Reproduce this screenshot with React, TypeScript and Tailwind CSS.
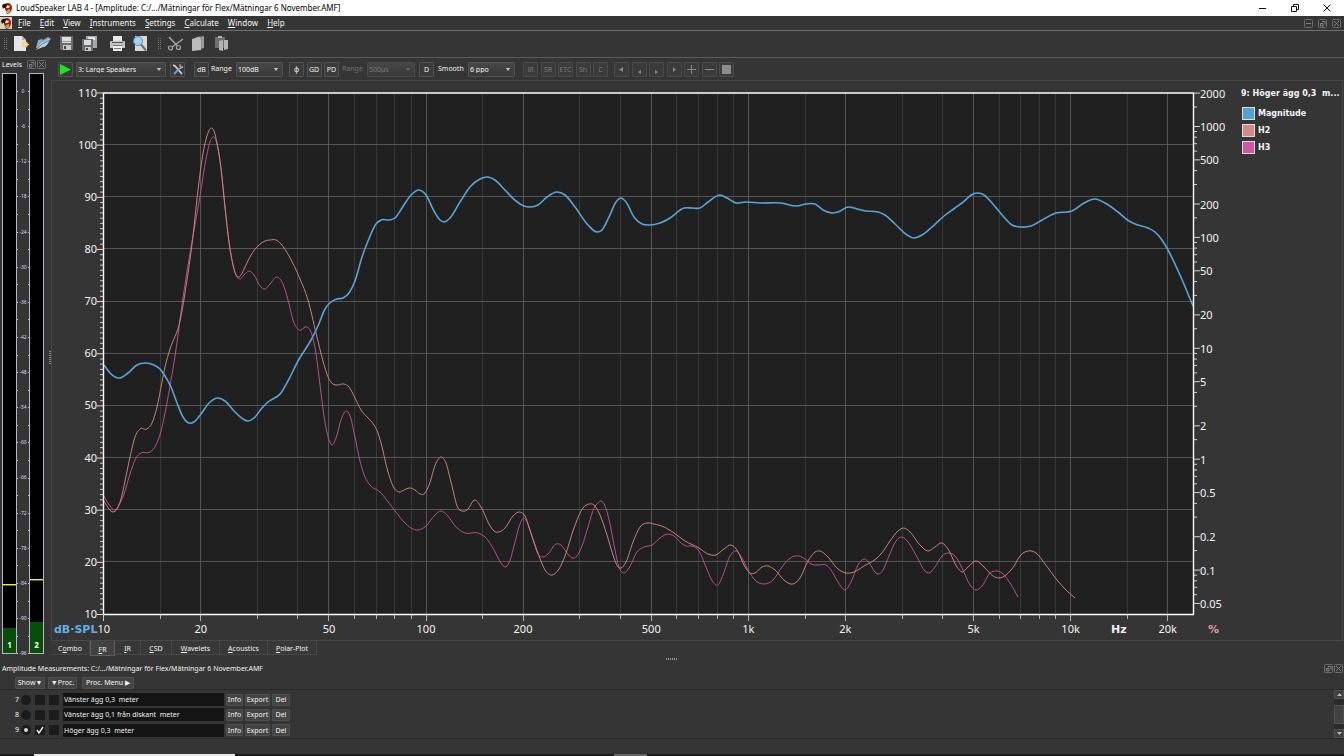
import { useState } from 'react'
import type { ReactNode } from 'react'
import clsx from 'clsx'

type Point = [number, number]

const MENUS = ['File', 'Edit', 'View', 'Instruments', 'Settings', 'Calculate', 'Window', 'Help']

const TABS = [
  { name: 'Combo', key: 1, width: 'w-[39px]' },
  { name: 'FR', key: 0, width: 'w-[25px]' },
  { name: 'IR', key: 0, width: 'w-[26px]' },
  { name: 'CSD', key: 0, width: 'w-[31px]' },
  { name: 'Wavelets', key: 0, width: 'w-[48px]' },
  { name: 'Acoustics', key: 0, width: 'w-[48px]' },
  { name: 'Polar-Plot', key: 0, width: 'w-[49px]' },
]

const MEASUREMENTS = [
  { id: 7, name: 'Vänster ägg 0,3  meter' },
  { id: 8, name: 'Vänster ägg 0,1 från diskant  meter' },
  { id: 9, name: 'Höger ägg 0,3  meter' },
]

const LEGEND = [
  { name: 'Magnitude', swatch: 'bg-[#559fd3]' },
  { name: 'H2', swatch: 'bg-[#d18a86]' },
  { name: 'H3', swatch: 'bg-[#d4559f]' },
]

const MAGNITUDE: Point[] = [
  [104, 365], [110, 373], [119, 378], [128, 373], [137, 365], [145, 363], [154, 365], [160, 369], [165, 376],
  [171, 387], [177, 403], [183, 417], [189, 423], [194, 422], [201, 414], [209, 403], [218, 398], [225, 401],
  [235, 412], [243, 419], [248, 421], [254, 418], [262, 408], [268, 402], [281, 393], [289, 379],
  [298, 361], [311, 340], [318, 326], [325, 309], [331, 302], [337, 299], [343, 298], [349, 293], [355, 281],
  [362, 257], [368, 241], [376, 224], [381, 220], [389, 220], [395, 218], [402, 208], [411, 195], [419, 190],
  [426, 195], [434, 211], [440, 220], [444, 222], [450, 218], [460, 202], [470, 187], [480, 179], [488, 177],
  [495, 180], [505, 190], [516, 201], [524, 206], [530, 207], [538, 205], [547, 197], [557, 192], [565, 195],
  [575, 207], [588, 225], [597, 232], [602, 230], [609, 217], [616, 202], [621, 198], [626, 202], [634, 217],
  [642, 224], [649, 225], [660, 223], [670, 218], [684, 208], [692, 208], [700, 208], [708, 202], [720, 195],
  [727, 198], [736, 203], [745, 202], [760, 203], [781, 203], [797, 206], [806, 204],
  [815, 204], [823, 210], [832, 213], [838, 212], [848, 207], [857, 209], [866, 211], [878, 212], [885, 215],
  [895, 224], [907, 235], [914, 238], [922, 235], [932, 227], [944, 216], [955, 208], [962, 203], [973, 194],
  [978, 193], [984, 195], [992, 203], [1003, 216], [1012, 225], [1021, 227], [1031, 226], [1042, 220],
  [1056, 213], [1072, 211], [1084, 203], [1095, 199], [1105, 203], [1118, 212], [1129, 221], [1138, 225],
  [1148, 228], [1155, 232], [1162, 240], [1168, 250], [1180, 275], [1193, 306],
]

const H2: Point[] = [
  [104, 501], [109, 509], [113, 512], [117, 509], [121, 499], [125, 481], [130, 457], [135, 437], [140, 429],
  [147, 429], [152, 423], [157, 407], [162, 382], [165, 367], [170, 349], [180, 321], [187, 280], [193, 236],
  [198, 190], [204, 148], [208, 133], [211, 128], [214, 131], [217, 143], [221, 168], [225, 207], [229, 242],
  [233, 265], [236, 275], [238, 277], [241, 275], [245, 267], [251, 255], [258, 246], [265, 241], [270, 240],
  [276, 240], [281, 244], [289, 256], [300, 279], [308, 300], [316, 333], [323, 361], [328, 377], [333, 384],
  [337, 385], [344, 384], [349, 387], [355, 398], [361, 410], [368, 418], [374, 425], [378, 433], [381, 443],
  [388, 472], [394, 488], [399, 492], [404, 490], [410, 488], [415, 490], [420, 494], [425, 493], [429, 485],
  [436, 463], [441, 457], [446, 463], [451, 482], [458, 508], [462, 511], [467, 510], [475, 500], [481, 507],
  [489, 524], [494, 531], [499, 532], [505, 528], [513, 516], [520, 512], [525, 516], [530, 530], [539, 556],
  [545, 570], [552, 575], [559, 569], [565, 556], [574, 528], [583, 508], [589, 504], [594, 505], [600, 515],
  [607, 535], [614, 558], [618, 567], [621, 568], [626, 562], [633, 542], [640, 527], [647, 523], [654, 524],
  [664, 527], [674, 533], [685, 541], [699, 548], [708, 554], [716, 555], [724, 549], [731, 545], [737, 550],
  [745, 567], [750, 573], [755, 573], [762, 567], [768, 566], [775, 570], [785, 581], [793, 584], [800, 578],
  [808, 561], [815, 552], [820, 551], [827, 556], [838, 569], [846, 573], [854, 572], [864, 566], [873, 561],
  [881, 554], [890, 541], [898, 531], [904, 528], [910, 532], [920, 545], [928, 551], [935, 547], [942, 543],
  [948, 549], [957, 567], [962, 572], [968, 567], [976, 561], [984, 567], [993, 576], [999, 578], [1006, 575],
  [1014, 566], [1020, 556], [1028, 551], [1036, 553], [1045, 564], [1057, 580], [1067, 591], [1075, 598],
]

const H3: Point[] = [
  [104, 496], [110, 506], [115, 510], [119, 505], [124, 494], [130, 474], [136, 458], [141, 453], [150, 452],
  [156, 445], [161, 431], [166, 408], [171, 380], [175, 356], [178, 335], [181, 312], [186, 278], [192, 242],
  [200, 196], [206, 159], [210, 142], [214, 137], [217, 144], [221, 169], [225, 207], [229, 242], [233, 265],
  [237, 277], [240, 279], [244, 275], [249, 271], [254, 275], [260, 286], [265, 289], [270, 284], [277, 277],
  [283, 284], [288, 300], [293, 320], [299, 330], [307, 327], [311, 332], [316, 354], [320, 385], [324, 416],
  [329, 440], [332, 445], [336, 438], [341, 420], [346, 411], [350, 416], [355, 437], [360, 461], [365, 477],
  [370, 485], [380, 492], [392, 507], [404, 522], [411, 528], [418, 530], [426, 526], [435, 515], [441, 511],
  [447, 515], [456, 527], [465, 533], [478, 533], [486, 538], [494, 550], [501, 563], [505, 567], [509, 563],
  [514, 546], [520, 524], [524, 518], [528, 525], [533, 540], [538, 554], [543, 557], [548, 554], [556, 544],
  [561, 545], [567, 553], [572, 558], [577, 556], [582, 546], [588, 527], [594, 508], [598, 503], [601, 501],
  [605, 506], [610, 524], [615, 550], [619, 567], [624, 573], [629, 568], [637, 552], [644, 547], [652, 545],
  [660, 538], [668, 534], [674, 536], [681, 543], [686, 546], [692, 546], [699, 551], [706, 567], [713, 582],
  [718, 585], [723, 575], [730, 556], [736, 551], [742, 558], [748, 570], [755, 580], [764, 584], [773, 580],
  [782, 567], [789, 559], [799, 556], [805, 559], [811, 564], [819, 565], [826, 565], [831, 570], [838, 582],
  [845, 590], [851, 582], [858, 565], [864, 559], [870, 564], [875, 572], [879, 574], [883, 570], [889, 556],
  [896, 541], [902, 537], [908, 542], [917, 557], [925, 571], [929, 573], [935, 567], [942, 556], [948, 553],
  [955, 556], [962, 568], [970, 585], [976, 590], [982, 586], [990, 573], [996, 571], [1002, 573], [1010, 583],
  [1018, 597],
]

// plot area in chart units
const LEFT = 104
const RIGHT = 1193
const TOP = 93
const BOTTOM = 614

const freqX = (f: number) => 103.7 + 322.3 * Math.log10(f / 10)
const dbY = (db: number) => 92.5 + (110 - db) * 5.215
const percentY = (p: number) => 126 - 110.9 * Math.log10(p / 1000)

// cubic hermite through all points, slopes weighted by the spacing on both sides
function smooth(pts: Point[]) {
  const slope = (i: number) => (pts[i + 1][1] - pts[i][1]) / (pts[i + 1][0] - pts[i][0])
  const last = pts.length - 1
  const tangents = pts.map((p, i) => {
    if (i === 0) return slope(0)
    if (i === last) return slope(last - 1)
    const before = p[0] - pts[i - 1][0]
    const after = pts[i + 1][0] - p[0]
    return (slope(i - 1) * after + slope(i) * before) / (before + after)
  })
  let d = `M${pts[0][0]} ${pts[0][1]}`
  for (let i = 0; i < last; i++) {
    const [x0, y0] = pts[i]
    const [x1, y1] = pts[i + 1]
    const h = (x1 - x0) / 3
    d += `C${x0 + h} ${y0 + tangents[i] * h} ${x1 - h} ${y1 - tangents[i + 1] * h} ${x1} ${y1}`
  }
  return d
}

const STEPS = [1, 1.5, 2, 3, 4, 5, 6, 7, 8, 9]
const isMajor = (m: number) => m === 1 || m === 2 || m === 5

const FREQS = [10, 100, 1000, 10000]
  .flatMap(dec => STEPS.map(m => ({ f: dec * m, major: isMajor(m) })))
  .filter(({ f }) => f <= 20000)

const PERCENTS = [0.01, 0.1, 1, 10, 100, 1000]
  .flatMap(dec => STEPS.map(m => ({ p: dec * m, major: isMajor(m) })))
  .filter(({ p }) => p >= 0.0499 && p <= 2000)

const freqLabel = (f: number) => (f >= 1000 ? `${f / 1000}k` : `${f}`)

function Chart() {
  return (
    <svg viewBox="52 81 1180 559" className="min-w-0 flex-1 font-['Noto_Sans',sans-serif] text-[11px]" role="img" aria-label="Frequency response">
      <rect x={LEFT} y={TOP} width={RIGHT - LEFT} height={BOTTOM - TOP} fill="#202020" />
      {FREQS.filter(({ f }) => f > 10).map(({ f, major }) => (
        <g key={f}>
          <path d={`M${Math.floor(freqX(f)) + 0.5} ${TOP}V${BOTTOM}`} stroke={major ? '#555' : '#383838'} />
          <path d={`M${Math.floor(freqX(f)) + 0.5} ${BOTTOM}v${major ? 7 : 5}`} stroke="#b4b4b4" />
        </g>
      ))}
      {[100, 90, 80, 70, 60, 50, 40, 30, 20].map(db => (
        <path key={db} d={`M${LEFT} ${Math.floor(dbY(db)) + 0.5}H${RIGHT}`} stroke="#555" />
      ))}
      {Array.from({ length: 101 }, (_, i) => (
        <path key={i} d={`M${i % 10 ? 100 : 97} ${dbY(110 - i) + 0.5}H103`} stroke={i % 10 ? '#c8c8d0' : '#e0e0e0'} />
      ))}
      {PERCENTS.map(({ p, major }) => (
        <path key={p} d={`M1194 ${percentY(p) + 0.5}h${major ? 6 : 3}`} stroke="#d0d0d8" />
      ))}
      <path d={smooth(H3)} fill="none" stroke="#b8508e" />
      <path d={smooth(H2)} fill="none" stroke="#c58480" />
      <path d={smooth(MAGNITUDE)} fill="none" stroke="#5aa5d8" strokeWidth="1.6" />
      <path d="M103.5 614V93H1193.5V614" fill="none" stroke="#fff" strokeWidth="1.4" />
      <path d="M103 614.5H1194" stroke="#fff" strokeWidth="1.4" />
      <path d="M103.5 614v7" stroke="#d0d0d0" />
      <g fill="#f4f4f4">
        {[110, 100, 90, 80, 70, 60, 50, 40, 30, 20, 10].map(db => (
          <text key={db} x="97" y={dbY(db) + 4} textAnchor="end">{db}</text>
        ))}
        {FREQS.filter(({ major }) => major).map(({ f }) => (
          <text key={f} x={freqX(f)} y="633" textAnchor="middle">{freqLabel(f)}</text>
        ))}
        {PERCENTS.filter(({ major }) => major).map(({ p }) => (
          <text key={p} x="1200" y={percentY(p) + 5}>{Number(p.toFixed(2))}</text>
        ))}
      </g>
      <g className="font-['DejaVu_Sans',sans-serif] font-bold">
        <text x="54" y="633" fill="#62b0e8">dB·SPL</text>
        <text x="1111" y="633" fill="#f0f0f0">Hz</text>
        <text x="1208" y="633" fill="#e89898">%</text>
      </g>
    </svg>
  )
}

const CHANNELS = [
  { id: 1, x: 3, level: 628, peak: 584 },
  { id: 2, x: 30, level: 622, peak: 579 },
]

function Meters() {
  return (
    <svg viewBox="0 71 50 585" className="w-full font-['Noto_Sans',sans-serif] text-[5px]" role="img" aria-label="Input levels">
      {CHANNELS.map(c => (
        <g key={c.id}>
          <rect x={c.x} y="73" width="14" height="581" fill="#000" />
          <rect x={c.x} y={c.level} width="14" height={654 - c.level} fill="#054f0b" />
          <rect x={c.x - 0.5} y="73.5" width="14" height="580" fill="none" stroke="#b9b3cc" />
          <rect x={c.x} y={c.peak} width="13" height="1.4" fill="#f4f418" />
          <text x={c.x + 6.5} y="648" fill="#fff" textAnchor="middle" className="text-[8px] font-bold">{c.id}</text>
        </g>
      ))}
      {Array.from({ length: 33 }, (_, i) => (
        <path key={i} d={`M17 ${Math.round(91 + i * 17.57)}.5h1M28 ${Math.round(91 + i * 17.57)}.5h1`} stroke="#c8c4d4" />
      ))}
      {Array.from({ length: 17 }, (_, i) => (
        <text key={i} x="23" y={93 + i * 35.13} fill="#dcdce4" textAnchor="middle">{i * -6}</text>
      ))}
    </svg>
  )
}

function Parrot({ className }: { className?: string }) {
  return (
    <svg viewBox="0 0 12 12" className={className}>
      <path d="M4 2Q7 0 9.500 2Q12 5 10.500 8L9 11Q5 10 4 7Z" fill="#a81814" />
      <path d="M1 4Q2 1 5 2L8 3L6 6Q3 5 2 7Z" fill="#1b1510" />
      <path d="M6 3l3 1-1 2-3 0Z" fill="#e9e2c0" />
      <path d="M6 8l3-1 0 3-2 1.500Z" fill="#d6a51c" />
      <path d="M4 8l2 3 3 .5-3 .5Z" fill="#22301a" />
    </svg>
  )
}

// small square buttons found on every dock title
function DockIcon({ kind }: { kind: 'float' | 'close' | 'min' }) {
  return (
    <svg viewBox="0 0 9 9" className="size-[9px]" fill="none" stroke="#848484">
      <rect x="0.5" y="0.5" width="8" height="8" rx="1" stroke="#6c6c6c" />
      {kind === 'close' && <path d="M2 2l5 5M7 2l-5 5" />}
      {kind === 'float' && <path d="M4 2.500h3v3M2.500 4.500h2.500v2.500h-2.500z" />}
      {kind === 'min' && <path d="M2 4.500h5" />}
    </svg>
  )
}

function Grip() {
  return (
    <svg viewBox="0 0 4 12" className="h-[12px] w-[4px] shrink-0" fill="#7a7a7a">
      {[0, 2, 4, 6, 8, 10].map(y => (
        <g key={y}>
          <rect y={y} width="1" height="1" />
          <rect x="2" y={y} width="1" height="1" />
        </g>
      ))}
    </svg>
  )
}

function IconButton({ label, className, children }: { label: string; className?: string; children: ReactNode }) {
  return (
    <button aria-label={label} className={clsx('size-[17px] shrink-0', className)}>
      <svg viewBox="0 0 17 17" className="size-full">{children}</svg>
    </button>
  )
}

function FileToolbar() {
  return (
    <div className="flex h-[27px] items-center border-b border-[#5a5a5a] pb-[1px] pl-[4px]">
      <Grip />
      <IconButton label="New" className="ml-[5px]">
        <path d="M1 1h8l4 4v11H1z" fill="#e4e4ea" />
        <path d="M9 1v4h4z" fill="#b5b5bd" />
        <circle cx="12" cy="9.500" r="3" fill="#f4c878" />
        <path d="M12 5.500v8M8 9.500h8" stroke="#f6d9a0" />
      </IconButton>
      <IconButton label="Open" className="ml-[5px]">
        <path d="M1 13L3 5l4-1 1 1 5-3 2 1-5 9z" fill="#8ba9bd" />
        <path d="M1 15L6 8l10-5-4 7z" fill="#b7d2e4" />
        <path d="M2 14l5-5 8-4" fill="none" stroke="#5e8199" />
      </IconButton>
      <IconButton label="Save" className="ml-[6px]">
        <path d="M2 1h13v14H3l-1-1z" fill="#6c6c6c" />
        <rect x="4" y="2" width="9" height="6" fill="#dcdfe2" />
        <rect x="4" y="6" width="9" height="1" fill="#9a9a9a" />
        <rect x="5" y="10" width="8" height="5" fill="#c9c9c9" />
        <rect x="6" y="11" width="2" height="3" fill="#444" />
      </IconButton>
      <IconButton label="Save all" className="ml-[6px]">
        <path d="M5 1h11v12H5z" fill="#a5a9ab" />
        <path d="M7 2h7v3H7z" fill="#e6e6e6" />
        <path d="M1 4h11v12H2l-1-1z" fill="#6c6c6c" />
        <rect x="3" y="5" width="7" height="5" fill="#d8dbde" />
        <rect x="4" y="12" width="6" height="4" fill="#c9c9c9" />
        <rect x="5" y="13" width="2" height="2" fill="#444" />
      </IconButton>
      <IconButton label="Print" className="ml-[11px]">
        <path d="M4 1h9v6H4z" fill="#e8e8e8" />
        <path d="M1 7q0-1 1-1h13q1 0 1 1v6H1z" fill="#c2c2c2" />
        <path d="M3 7.500h11" stroke="#555" />
        <path d="M4 10h9v6H4z" fill="#eee" />
        <path d="M4 10.500h9M5 13.500h7" stroke="#777" />
      </IconButton>
      <IconButton label="Print preview" className="ml-[6px]">
        <path d="M3 1h12v15H3z" fill="#dadada" />
        <circle cx="6" cy="6" r="4.500" fill="#a7d0ea" stroke="#5d8ead" />
        <path d="M9 9.500l5 6" stroke="#6b6b6b" strokeWidth="2" />
      </IconButton>
      <div className="ml-[9px]">
        <Grip />
      </div>
      <IconButton label="Cut" className="ml-[5px]">
        <path d="M2 2l8 8.500M16 4L5 12" stroke="#a9a9a9" strokeWidth="1.4" />
        <circle cx="3.500" cy="13" r="2" fill="none" stroke="#a9a9a9" strokeWidth="1.2" />
        <circle cx="11.500" cy="12.500" r="2" fill="none" stroke="#a9a9a9" strokeWidth="1.2" />
      </IconButton>
      <IconButton label="Copy" className="ml-[6px]">
        <path d="M6 2l8-1v12l-4 1z" fill="#8d8d8d" />
        <path d="M2 4l7-2 2 2v11l-9 1z" fill="#bcbcbc" />
        <path d="M13 2v11" stroke="#b0b0b0" />
      </IconButton>
      <IconButton label="Paste" className="ml-[6px]">
        <path d="M2 2h10v11H2z" fill="#707070" />
        <path d="M5 1h4v2H5z" fill="#b4b4b4" />
        <path d="M6 6l4-1v11l-4-1zM11 5l4 0v9l-4 1z" fill="#b4b4b4" />
      </IconButton>
    </div>
  )
}

function SquareButton({ children, disabled, label }: { children: ReactNode; disabled?: boolean; label?: string }) {
  return (
    <button
      aria-label={label}
      disabled={disabled}
      className={clsx(
        'flex h-[15px] w-[15px] shrink-0 items-center justify-center rounded-[1px] border bg-[#3b3b3b] leading-none',
        disabled ? 'border-[#4b4b4b] text-[#7c7c7c]' : 'border-[#525252] text-[#f0f0f0]',
      )}
    >
      {children}
    </button>
  )
}

function Dropdown({ label, options, width, disabled }: { label: string; options: string[]; width: string; disabled?: boolean }) {
  return (
    <div className={clsx('relative shrink-0', width)}>
      <select
        aria-label={label}
        disabled={disabled}
        className={clsx(
          'block h-[15px] w-full appearance-none rounded-[1px] border bg-linear-to-b from-[#474747] to-[#393939] pl-px leading-none opacity-100',
          disabled ? 'border-[#4b4b4b] text-[#7c7c7c]' : 'border-[#525252] text-[#f4f4f4]',
        )}
      >
        {options.map(o => <option key={o}>{o}</option>)}
      </select>
      <svg viewBox="0 0 6 4" className="pointer-events-none absolute top-[6px] right-[4px] h-[3px] w-[6px]">
        <path d="M0 0h6L3 4z" fill={disabled ? '#666' : '#c4c4c4'} />
      </svg>
    </div>
  )
}

const STEP_ICONS = [
  { label: 'First', d: 'M9 5v5L5 7.500z' },
  { label: 'Previous', d: 'M9 8v4L6 10z' },
  { label: 'Next', d: 'M6 8v4L9 10z' },
  { label: 'Last', d: 'M6 5v5L9 7.500z' },
  { label: 'Add', d: 'M7 3h1v4h4v1H8v4H7V8H3V7h4z' },
  { label: 'Remove', d: 'M3 7h9v1H3z' },
  { label: 'Stop', d: 'M3 3h9v9H3z' },
]

function MeasureToolbar() {
  return (
    <div className="flex h-[22px] items-center pl-[7px]">
      <SquareButton label="Run">
        <svg viewBox="0 0 13 13" className="size-[13px]"><path d="M1 1l11 5.500L1 12z" fill="#1ee61e" /></svg>
      </SquareButton>
      <div className="ml-[3px]">
        <Dropdown label="Setup" options={['3: Large Speakers']} width="w-[90px]" />
      </div>
      <div className="ml-[4px]">
        <SquareButton label="Options">
          <svg viewBox="0 0 13 13" className="size-[13px]" fill="none">
            <path d="M2 2l2 1 7 8" stroke="#d8d8d8" strokeWidth="1.6" />
            <path d="M8 6l-5 5" stroke="#6fa3cc" strokeWidth="2" />
            <path d="M9 1v3h3L9 5.500 7.500 6" stroke="#c8c8c8" />
          </svg>
        </SquareButton>
      </div>
      <div className="ml-[9px]"><SquareButton>dB</SquareButton></div>
      <span className="ml-[2px] w-[25px] text-[#f4f4f4]">Range</span>
      <Dropdown label="Range" options={['100dB']} width="w-[47px]" />
      <div className="ml-[6px] flex w-[50px] justify-between">
        <SquareButton>φ</SquareButton>
        <SquareButton>GD</SquareButton>
        <SquareButton>PD</SquareButton>
      </div>
      <span className="ml-[3px] w-[25px] text-[#747474]">Range</span>
      <Dropdown label="Delay range" options={['500µs']} width="w-[48px]" disabled />
      <div className="ml-[4px]"><SquareButton>D</SquareButton></div>
      <span className="ml-[4px] w-[30px] text-[#f4f4f4]">Smooth</span>
      <Dropdown label="Smooth" options={['6 ppo']} width="w-[47px]" />
      <div className="ml-[8px] flex w-[85px] justify-between">
        {['IR', 'SR', 'ETC', 'Sh', 'C'].map(t => <SquareButton key={t} disabled>{t}</SquareButton>)}
      </div>
      <div className="ml-[6px] flex w-[120px] justify-between">
        {STEP_ICONS.map(({ label, d }) => (
          <SquareButton key={label} label={label} disabled>
            <svg viewBox="0 0 15 15" className="size-[15px] shrink-0"><path d={d} fill="#8c8c8c" /></svg>
          </SquareButton>
        ))}
      </div>
    </div>
  )
}

function Tabs() {
  const [active, setActive] = useState('FR')
  return (
    <div role="tablist" className="flex h-[16px] items-start">
      {TABS.map(({ name, key, width }) => (
        <button
          key={name}
          role="tab"
          aria-selected={active === name}
          onClick={() => setActive(name)}
          className={clsx(
            'shrink-0 border-r border-b border-[#484848] pt-[2px] leading-none',
            width,
            active === name ? 'h-[15px] border-l border-[#606060] bg-[#424242]' : 'h-[14px] bg-[#383838]',
          )}
        >
          {name.slice(0, key)}
          <span className="underline">{name[key]}</span>
          {name.slice(key + 1)}
        </button>
      ))}
    </div>
  )
}

function SmallButton({ children, className }: { children: ReactNode; className: string }) {
  return (
    <button className={clsx('flex h-[12px] shrink-0 items-center justify-center rounded-[1px] border border-[#505050] bg-[#444] leading-none whitespace-nowrap', className)}>
      {children}
    </button>
  )
}

function Measurements() {
  const [active, setActive] = useState(9)
  const [shown, setShown] = useState<number[]>([9])

  const toggle = (id: number) =>
    setShown(ids => (ids.includes(id) ? ids.filter(i => i !== id) : [...ids, id]))

  return (
    <section>
      <div className="flex h-[15px] items-center justify-between pr-[1px] pl-[2px]">
        <h2>Amplitude Measurements: C:/.../Mätningar för Flex/Mätningar 6 November.AMF</h2>
        <div className="flex gap-[1px]">
          <button aria-label="Float measurements"><DockIcon kind="float" /></button>
          <button aria-label="Close measurements"><DockIcon kind="close" /></button>
        </div>
      </div>
      <div className="flex h-[13px] items-center pl-[15px]">
        <SmallButton className="w-[30px]">Show▼</SmallButton>
        <SmallButton className="ml-[3px] w-[29px]">▼Proc.</SmallButton>
        <SmallButton className="ml-[5px] w-[52px]">Proc. Menu ▶</SmallButton>
      </div>
      <div className="flex h-[50px] justify-between border-y border-[#2a2a2a]">
        <div className="grid grow grid-rows-3 pt-[2px]">
          {MEASUREMENTS.map(({ id, name }) => (
            <div key={id} className="flex items-center">
              <span className="w-[19px] text-right">{id}</span>
              <input
                type="radio"
                name="active"
                aria-label={`Select measurement ${id}`}
                checked={active === id}
                onChange={() => setActive(id)}
                className="ml-[2px] size-[10px] appearance-none rounded-full border-[3px] border-[#1c1c1c] bg-[#1c1c1c] checked:bg-[#d8d8d8]"
              />
              <span className="relative ml-[4px] size-[10px]">
                <input
                  type="checkbox"
                  aria-label={`Show measurement ${id}`}
                  checked={shown.includes(id)}
                  onChange={() => toggle(id)}
                  className="block size-[10px] appearance-none bg-[#1c1c1c]"
                />
                {shown.includes(id) && (
                  <svg viewBox="0 0 10 10" className="pointer-events-none absolute inset-0 size-[10px]">
                    <path d="M2 5l2 3 4-6" fill="none" stroke="#e8e8e8" strokeWidth="1.4" />
                  </svg>
                )}
              </span>
              <input type="checkbox" aria-label={`Process measurement ${id}`} className="ml-[4px] size-[10px] appearance-none bg-[#1c1c1c]" />
              <input
                aria-label={`Name of measurement ${id}`}
                defaultValue={name}
                className="ml-[4px] h-[13px] w-[161px] bg-[#141414] pl-[1px] text-[#f0f0f0]"
              />
              <SmallButton className="ml-[2px] w-[17px]">Info</SmallButton>
              <SmallButton className="ml-[2px] w-[25px]">Export</SmallButton>
              <SmallButton className="ml-[2px] w-[18px]">Del</SmallButton>
            </div>
          ))}
        </div>
        <div className="flex w-[10px] flex-col justify-between bg-[#2b2b2b]">
          <button aria-label="Scroll up" className="flex h-[9px] items-center justify-center border border-[#505050] bg-[#404040]">
            <svg viewBox="0 0 5 3" className="h-[3px] w-[5px]"><path d="M0 3h5L2.500 0z" fill="#bbb" /></svg>
          </button>
          <div className="mt-[1px] h-[19px] border border-[#505050] bg-[#424242]" />
          <button aria-label="Scroll down" className="flex h-[9px] items-center justify-center border border-[#505050] bg-[#404040]">
            <svg viewBox="0 0 5 3" className="h-[3px] w-[5px]"><path d="M0 0h5L2.500 3z" fill="#bbb" /></svg>
          </button>
        </div>
      </div>
    </section>
  )
}

export default function App() {
  return (
    <div className="flex min-h-screen flex-col bg-[#353535] font-['Noto_Sans',sans-serif] text-[7px] leading-[10px] text-[#f4f4f4]">
      <header className="flex h-[16px] items-center bg-white text-[8px] text-black">
        <Parrot className="ml-[1px] size-[12px]" />
        <h1 className="ml-[3px]">LoudSpeaker LAB 4 - [Amplitude: C:/.../Mätningar för Flex/Mätningar 6 November.AMF]</h1>
        <div className="ml-auto flex gap-[24px] pr-[13px]">
          <button aria-label="Minimize">
            <svg viewBox="0 0 8 8" className="size-[8px]" fill="none" stroke="#111"><path d="M0 4.500h7" /></svg>
          </button>
          <button aria-label="Restore">
            <svg viewBox="0 0 8 8" className="size-[8px]" fill="none" stroke="#111"><path d="M2.500 2V.5h5v5H6M.5 2.500h5v5h-5z" /></svg>
          </button>
          <button aria-label="Close">
            <svg viewBox="0 0 8 8" className="size-[8px]" fill="none" stroke="#111"><path d="M.5.5l7 7M7.500.5l-7 7" /></svg>
          </button>
        </div>
      </header>

      <nav className="flex h-[15px] items-center border-b border-[#707070] pr-[3px] text-[8px]">
        <Parrot className="size-[12px] bg-[#d8d0c0]" />
        <div className="ml-[6px] flex gap-[9px]">
          {MENUS.map(m => (
            <a key={m} href="#"><span className="underline">{m[0]}</span>{m.slice(1)}</a>
          ))}
        </div>
        <div className="ml-auto flex gap-[5px]">
          <button aria-label="Minimize document"><DockIcon kind="min" /></button>
          <button aria-label="Restore document"><DockIcon kind="float" /></button>
          <button aria-label="Close document"><DockIcon kind="close" /></button>
        </div>
      </nav>

      <FileToolbar />

      <main className="flex">
        <aside className="w-[50px] shrink-0">
          <div className="flex h-[13px] items-center pl-[2px]">
            <h2 className="w-[25px]">Levels</h2>
            <div className="flex gap-[1px]">
              <button aria-label="Float levels"><DockIcon kind="float" /></button>
              <button aria-label="Close levels"><DockIcon kind="close" /></button>
            </div>
          </div>
          <Meters />
        </aside>
        <div className="flex w-px items-center justify-center">
          <svg viewBox="0 0 3 14" className="h-[14px] w-[3px] shrink-0" fill="#888">
            {[0, 2, 4, 6, 8, 10, 12].map(y => <rect key={y} y={y} width="2" height="1" />)}
          </svg>
        </div>
        <div className="min-w-0 flex-1 pr-px">
          <MeasureToolbar />
          <div className="flex border border-[#484848]">
            <Chart />
            <aside className="w-[110px] shrink-0 pt-[8px] pl-[9px] font-['DejaVu_Sans',sans-serif] text-[8px] font-bold text-[#f4f4f4]">
              <h3 className="whitespace-nowrap">9: Höger ägg 0,3&nbsp; m...</h3>
              <ul className="mt-[8px] flex flex-col gap-[4px] pl-[1px]">
                {LEGEND.map(({ name, swatch }) => (
                  <li key={name} className="flex items-center gap-[3px]">
                    <span className={clsx('size-[13px] border border-[#ddd]', swatch)} />
                    {name}
                  </li>
                ))}
              </ul>
            </aside>
          </div>
          <Tabs />
        </div>
      </main>

      <div className="flex h-[4px] items-center justify-center">
        <svg viewBox="0 0 12 2" className="h-[2px] w-[12px]" fill="#999">
          {[0, 2, 4, 6, 8, 10].map(x => <rect key={x} x={x} width="1" height="2" />)}
        </svg>
      </div>

      <Measurements />

      <footer className="mt-auto flex h-[2px] bg-[#1c1c1c]">
        <div className="ml-[34px] w-[201px] bg-[#e8e8e8]" />
        <div className="ml-[379px] w-[33px] bg-[#666]" />
      </footer>
    </div>
  )
}
